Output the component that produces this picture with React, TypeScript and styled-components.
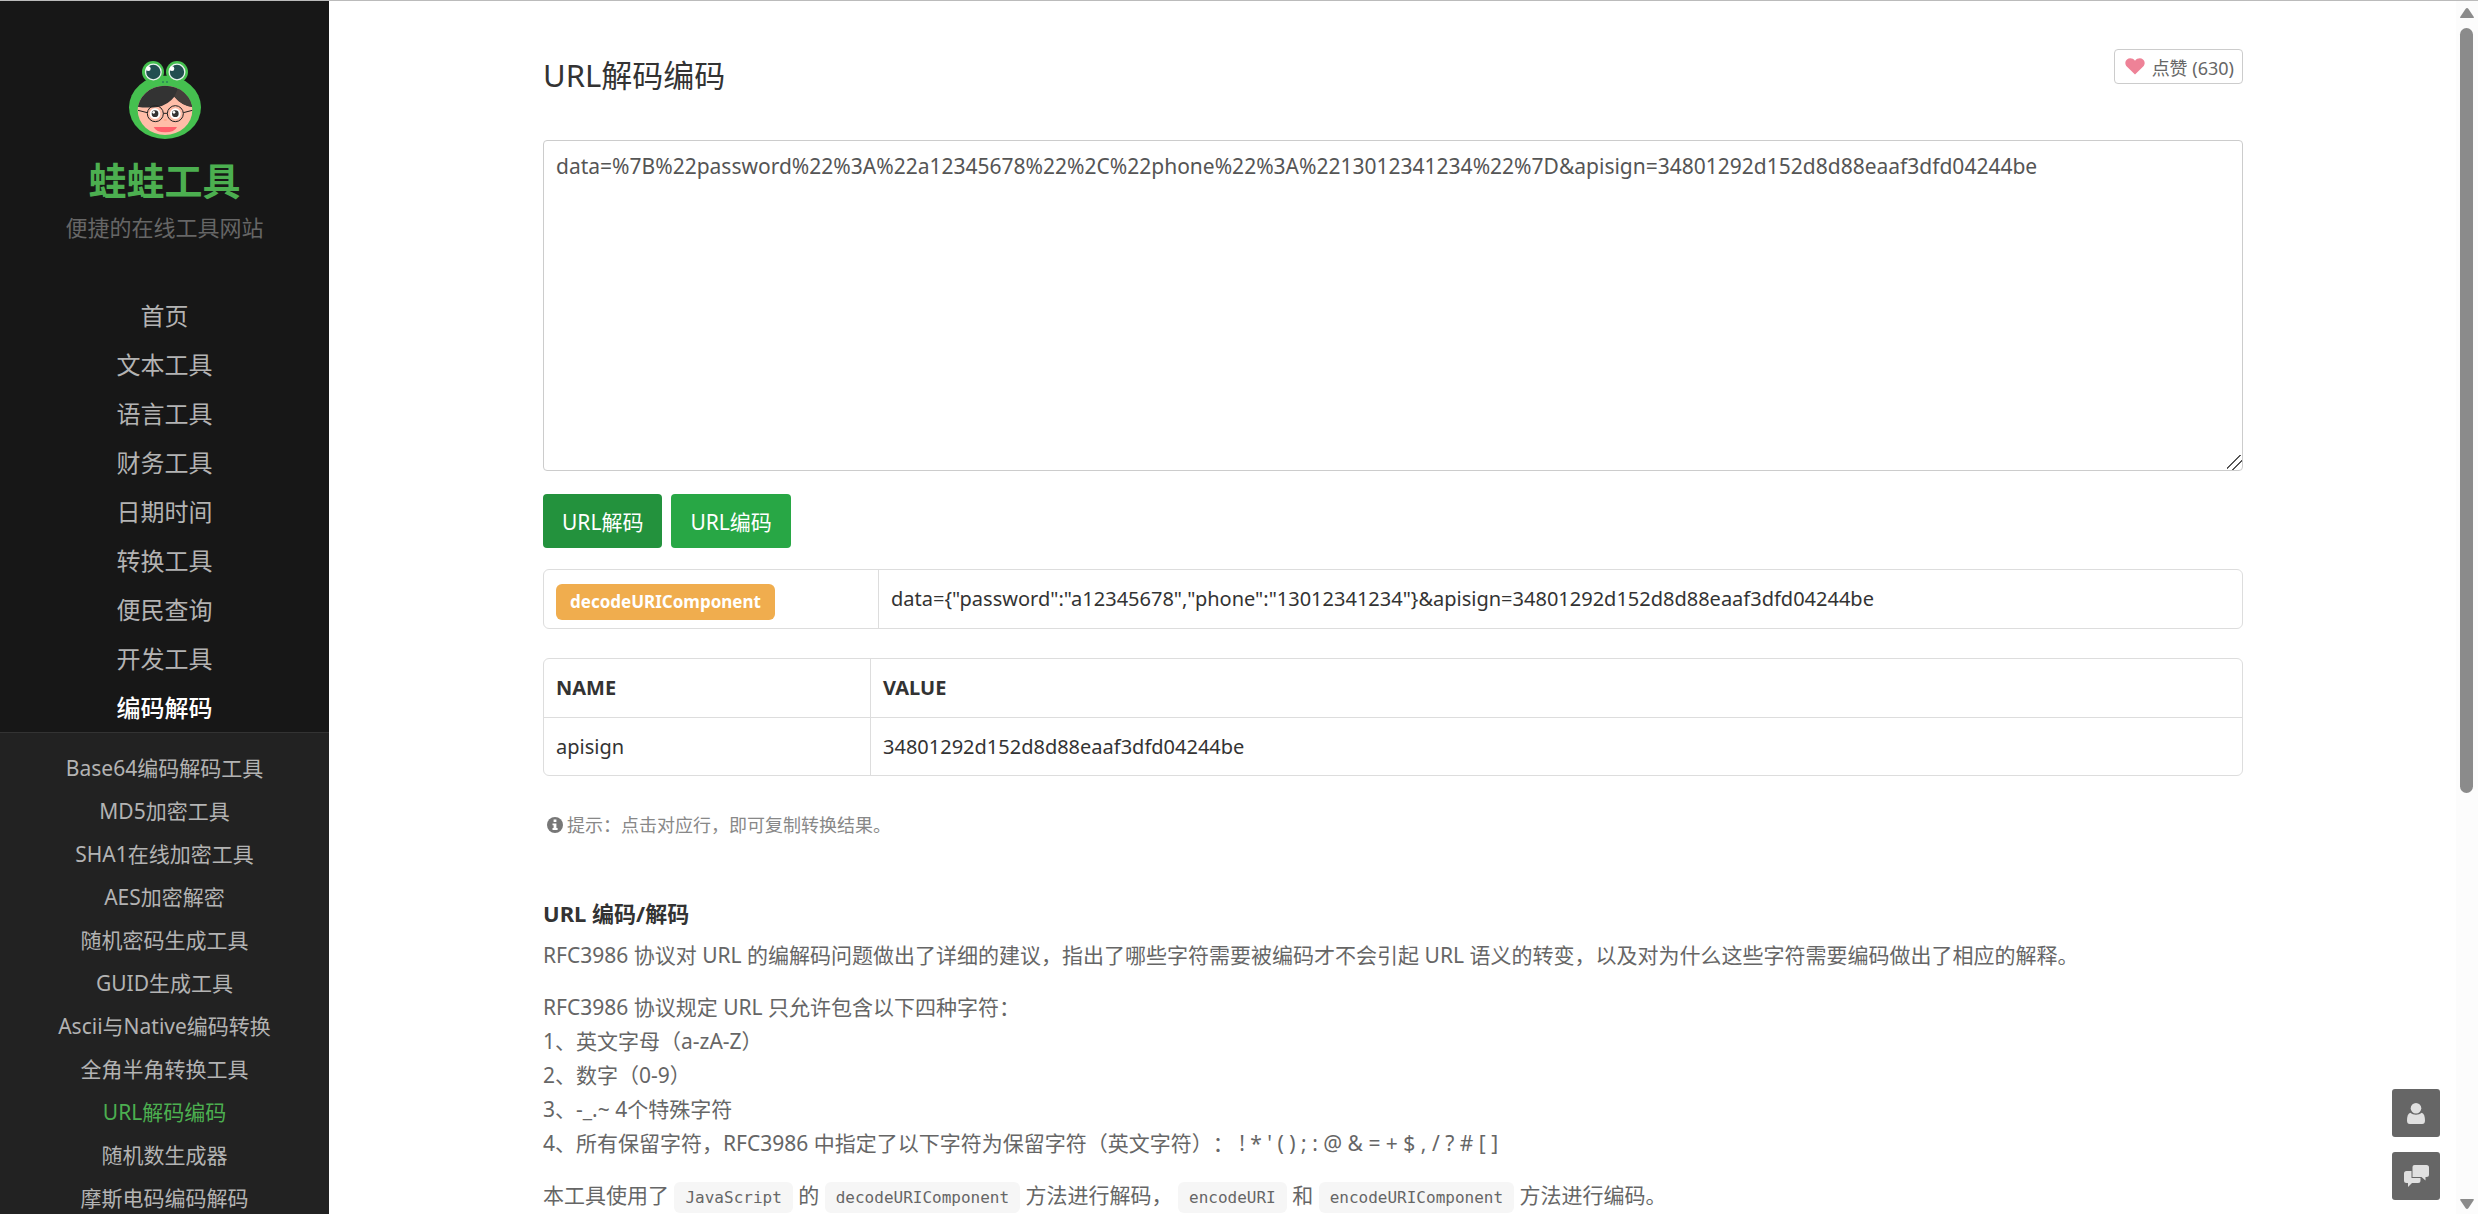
import React, { useState } from "react";
import styled, { createGlobalStyle } from "styled-components";

const sans = `"Noto Sans", "Noto Sans CJK SC", sans-serif`;

const GlobalStyle = createGlobalStyle`
  * { box-sizing: border-box; }
  body {
    margin: 0;
    background: #fff;
    color: #333;
    font-family: ${sans};
    font-size: 20px;
    line-height: 34px;
    text-spacing-trim: space-all;
  }
  button, textarea { font-family: inherit; }
  a { color: inherit; text-decoration: none; }
`;

const Shell = styled.div`
  display: grid;
  grid-template-columns: 329px minmax(0, 1fr) 22px;
  height: 100vh;
  border-top: 1px solid #bbb;
  overflow: hidden;
`;

const Sidebar = styled.aside`
  min-height: 0;
  padding-top: 60px;
  overflow: hidden;
  background: #171717;
  color: #b3b3b3;
  text-align: center;
`;

const Brand = styled.a`
  display: flex;
  flex-direction: column;
  align-items: center;
`;

const BrandName = styled.strong`
  margin-top: 14px;
  color: #4caf50;
  font-size: 38px;
  line-height: 54px;
`;

const BrandNote = styled.span`
  margin-top: 4px;
  color: #666;
  font-size: 22px;
  line-height: 32px;
`;

const NavList = styled.ul`
  margin: 48px 0 0;
  padding: 0;
  list-style: none;
`;

const NavLink = styled.a<{ $active?: boolean }>`
  display: block;
  font-size: 24px;
  line-height: 49px;
  color: ${(p) => (p.$active ? "#fff" : "inherit")};
  font-weight: ${(p) => (p.$active ? 500 : 400)};
`;

const SubList = styled.ul`
  margin: 0;
  padding: 14px 0 0;
  border-top: 1px solid #333;
  background: #222;
  list-style: none;
`;

const SubLink = styled.a<{ $active?: boolean }>`
  display: block;
  font-size: 21px;
  line-height: 43px;
  color: ${(p) => (p.$active ? "#4caf50" : "inherit")};
`;

const Main = styled.main`
  min-height: 0;
  padding-left: 1px;
  overflow: hidden;
`;

const Container = styled.div`
  max-width: 1700px;
  margin: 0 auto;
`;

const PageHead = styled.header`
  display: flex;
  justify-content: space-between;
  align-items: flex-start;
  padding: 48px 0 39px;
`;

const Title = styled.h1`
  margin: 0;
  font-size: 31px;
  font-weight: 400;
  line-height: 52px;
`;

const LikeButton = styled.button`
  display: flex;
  align-items: center;
  gap: 7px;
  height: 35px;
  padding: 0 8px 0 10px;
  border: 1px solid #ccc;
  border-radius: 4px;
  background: #fff;
  color: #666;
  font-size: 18px;
`;

const SourceBox = styled.textarea`
  display: block;
  width: 100%;
  height: 331px;
  padding: 8px 12px;
  border: 1px solid #ccc;
  border-radius: 4px;
  background: #fff;
  color: #555;
  font-size: 21px;
  line-height: 34px;
  outline: none;
  resize: vertical;

  &::-webkit-resizer {
    background: linear-gradient(
      135deg,
      transparent 42%,
      #555 42% 49%,
      transparent 49% 66%,
      #555 66% 73%,
      transparent 73%
    );
  }
`;

const Actions = styled.div`
  display: flex;
  gap: 9px;
  margin: 23px 0 21px;
`;

const ActionButton = styled.button<{ $pressed: boolean }>`
  height: 54px;
  padding: 0 19px;
  border: 0;
  border-radius: 4px;
  background: ${(p) => (p.$pressed ? "#23923d" : "#28a745")};
  color: #fff;
  font-size: 21px;
`;

const DataTable = styled.table<{ $first: number }>`
  width: 100%;
  table-layout: fixed;
  border: 1px solid #ddd;
  border-radius: 6px;
  border-spacing: 0;
  text-align: left;

  th, td { height: 58px; padding: 0 12px; }
  th:first-child { width: ${(p) => p.$first}px; }
  th + th, th + td, td + td { border-left: 1px solid #ddd; }
  thead + tbody td { border-top: 1px solid #ddd; }
  & + & { margin-top: 29px; }
`;

const Badge = styled.span`
  display: block;
  width: fit-content;
  margin-top: 6px;
  padding: 0 14px;
  border-radius: 6px;
  background: #f0ad4e;
  color: #fff;
  font-size: 17px;
  font-weight: 700;
  line-height: 36px;
`;

const Hint = styled.p`
  display: flex;
  align-items: center;
  gap: 4px;
  margin: 32px 0 0;
  padding-left: 4px;
  color: #888;
  font-size: 18px;
`;

const Article = styled.article`
  margin-top: 53px;
  color: #666;
  font-size: 21px;

  p { margin: 0 0 18px; }
`;

const ArticleTitle = styled.h2`
  margin: 0 0 7px;
  color: #333;
  font-size: 22px;
  font-weight: 700;
  line-height: 36px;
`;

const Code = styled.code`
  padding: 6px 11px;
  border-radius: 6px;
  background: #f6f6f6;
  font-family: "DejaVu Sans Mono", monospace;
  font-size: 16px;
`;

const FloatTools = styled.div`
  position: fixed;
  right: 38px;
  bottom: 14px;
  display: grid;
  gap: 15px;
`;

const FloatButton = styled.button`
  display: grid;
  place-items: center;
  width: 48px;
  height: 48px;
  padding: 0;
  border: 0;
  border-radius: 3px;
  background: #666;
`;

const ScrollTrack = styled.div`
  display: flex;
  flex-direction: column;
  align-items: center;
  padding: 7px 1px 5px 0;
  background: #fcfcfc;
`;

const ScrollThumb = styled.div`
  width: 13px;
  height: 63vh;
  margin: 10px 0 auto;
  border-radius: 7px;
  background: #8b8b8b;
`;

const FrogLogo = () => (
  <svg width="72" height="78" viewBox="387 183 216 234" aria-hidden="true">
    <circle cx="459" cy="216" r="33" fill="#45c04f" />
    <circle cx="531" cy="216" r="33" fill="#45c04f" />
    <ellipse cx="495" cy="322" rx="108" ry="95" fill="#45c04f" />
    <circle cx="460" cy="216" r="23.5" fill="#224f50" stroke="#e8f3ee" strokeWidth="4" />
    <circle cx="531" cy="216" r="23.5" fill="#224f50" stroke="#e8f3ee" strokeWidth="4" />
    <circle cx="445" cy="206" r="7" fill="#fff" />
    <circle cx="516" cy="206" r="7" fill="#fff" />
    <rect x="486" y="243" width="6" height="6" rx="2" fill="#2c8a55" />
    <rect x="498" y="243" width="6" height="6" rx="2" fill="#2c8a55" />
    <clipPath id="face"><ellipse cx="495" cy="331" rx="82" ry="74" /></clipPath>
    <g clipPath="url(#face)">
      <rect x="410" y="255" width="170" height="155" fill="#ffbda8" />
      <path d="M410 250H580V321Q545 317 523 290Q505 314 473 321Q440 325 410 320Z" fill="#333" />
      <path d="M536 262Q530 274 523 290Q545 317 580 322V262Z" fill="#443e3b" />
    </g>
    <circle cx="465" cy="341" r="16" fill="#fff" />
    <circle cx="526" cy="341" r="16" fill="#fff" />
    <circle cx="465" cy="341" r="10" fill="#333" />
    <circle cx="526" cy="341" r="10" fill="#333" />
    <circle cx="461" cy="337" r="4" fill="#fff" />
    <circle cx="522" cy="337" r="4" fill="#fff" />
    <g fill="none" stroke="#222" strokeWidth="3">
      <circle cx="466" cy="341" r="24" />
      <circle cx="526" cy="341" r="24" />
      <path d="M490 340H502M442 338L414 331M550 338L577 331" />
    </g>
    <ellipse cx="496" cy="360" rx="5" ry="3" fill="#ffa98d" />
    <path d="M461 381H531Q524 397 496 397Q468 397 461 381Z" fill="#ff5f6b" />
  </svg>
);

const HeartIcon = () => (
  <svg width="20" height="17" viewBox="0 0 20 17" aria-hidden="true">
    <path d="M10 16.5L1.8 8.6C-.4 6.3 .1 2.9 2 1.4C4.3 -.3 7.8 .1 10 2.7C12.2 .1 15.7 -.3 18 1.4C19.9 2.9 20.4 6.3 18.2 8.6Z" fill="#ee8297" />
  </svg>
);

const InfoIcon = () => (
  <svg width="16" height="16" viewBox="0 0 16 16" aria-hidden="true">
    <circle cx="8" cy="8" r="8" fill="#777" />
    <path d="M6.6 2.5H9.4V5H6.6ZM5.5 6.4H9.4V11H10.6V13H5.5V11H6.6V8.2H5.5Z" fill="#fff" />
  </svg>
);

const UserIcon = () => (
  <svg width="18" height="21" viewBox="0 0 18 21" aria-hidden="true" fill="#e0e0e0">
    <circle cx="9" cy="5.3" r="5.3" />
    <path d="M3.2 9.8C6.4 12.4 11.6 12.4 14.8 9.8C17 10.5 18 13.5 18 17.5C18 20 17 21 15.2 21H2.8C1 21 0 20 0 17.5C0 13.5 1 10.5 3.2 9.8Z" />
  </svg>
);

const ChatIcon = () => (
  <svg width="25" height="22" viewBox="0 0 25 22" aria-hidden="true" fill="#e0e0e0">
    <path d="M10.5 0H22.5Q25 0 25 2.5V9.5Q25 12 22.5 12H21.5V15.5L17.5 12H8.5V2Q8.5 0 10.5 0Z" />
    <path d="M7.5 6V13H16.5V15.5Q16.5 18 14 18H8L4 22V18H2.5Q0 18 0 15.5V8.5Q0 6 2.5 6Z" />
  </svg>
);

const ArrowIcon = ({ down }: { down?: boolean }) => (
  <svg width="14" height="10" viewBox="0 0 14 10" aria-hidden="true">
    <path
      d={
        down
          ? "M1 0H13Q14.5 0 13.5 1.5L8.5 9Q7 10.8 5.5 9L.5 1.5Q-.5 0 1 0Z"
          : "M1 10H13Q14.5 10 13.5 8.5L8.5 1Q7 -.8 5.5 1L.5 8.5Q-.5 10 1 10Z"
      }
      fill="#8b8b8b"
    />
  </svg>
);

const categories = ["首页", "文本工具", "语言工具", "财务工具", "日期时间", "转换工具", "便民查询", "开发工具", "编码解码"];

const tools = [
  "Base64编码解码工具",
  "MD5加密工具",
  "SHA1在线加密工具",
  "AES加密解密",
  "随机密码生成工具",
  "GUID生成工具",
  "Ascii与Native编码转换",
  "全角半角转换工具",
  "URL解码编码",
  "随机数生成器",
  "摩斯电码编码解码",
];

const sample =
  "data=%7B%22password%22%3A%22a12345678%22%2C%22phone%22%3A%2213012341234%22%7D&apisign=34801292d152d8d88eaaf3dfd04244be";

export default function App() {
  const [source, setSource] = useState(sample);
  const [mode, setMode] = useState<"decode" | "encode">("decode");

  return (
    <>
      <GlobalStyle />
      <Shell>
        <Sidebar>
          <Brand href="#">
            <FrogLogo />
            <BrandName>蛙蛙工具</BrandName>
            <BrandNote>便捷的在线工具网站</BrandNote>
          </Brand>
          <nav>
            <NavList>
              {categories.map((name) => (
                <li key={name}>
                  <NavLink href="#" $active={name === "编码解码"}>{name}</NavLink>
                </li>
              ))}
            </NavList>
            <SubList>
              {tools.map((name) => (
                <li key={name}>
                  <SubLink href="#" $active={name === "URL解码编码"}>{name}</SubLink>
                </li>
              ))}
            </SubList>
          </nav>
        </Sidebar>

        <Main>
          <Container>
            <PageHead>
              <Title>URL解码编码</Title>
              <LikeButton type="button">
                <HeartIcon />
                点赞 (630)
              </LikeButton>
            </PageHead>

            <SourceBox
              aria-label="URL解码编码"
              spellCheck={false}
              value={source}
              onChange={(e) => setSource(e.target.value)}
            />

            <Actions>
              <ActionButton type="button" $pressed={mode === "decode"} onClick={() => setMode("decode")}>
                URL解码
              </ActionButton>
              <ActionButton type="button" $pressed={mode === "encode"} onClick={() => setMode("encode")}>
                URL编码
              </ActionButton>
            </Actions>

            <DataTable $first={334}>
              <tbody>
                <tr>
                  <th scope="row"><Badge>decodeURIComponent</Badge></th>
                  <td>{'data={"password":"a12345678","phone":"13012341234"}&apisign=34801292d152d8d88eaaf3dfd04244be'}</td>
                </tr>
              </tbody>
            </DataTable>

            <DataTable $first={326}>
              <thead>
                <tr>
                  <th scope="col">NAME</th>
                  <th scope="col">VALUE</th>
                </tr>
              </thead>
              <tbody>
                <tr>
                  <td>apisign</td>
                  <td>34801292d152d8d88eaaf3dfd04244be</td>
                </tr>
              </tbody>
            </DataTable>

            <Hint>
              <InfoIcon />
              提示：点击对应行，即可复制转换结果。
            </Hint>

            <Article>
              <ArticleTitle>URL 编码/解码</ArticleTitle>
              <p>
                RFC3986 协议对 URL 的编解码问题做出了详细的建议，指出了哪些字符需要被编码才不会引起 URL 语义的转变，以及对为什么这些字符需要编码做出了相应的解释。
              </p>
              <p>
                RFC3986 协议规定 URL 只允许包含以下四种字符：
                <br />
                1、英文字母（a-zA-Z）
                <br />
                2、数字（0-9）
                <br />
                3、-_.~ 4个特殊字符
                <br />
                4、所有保留字符，RFC3986 中指定了以下字符为保留字符（英文字符）： ! * ' ( ) ; : @ &amp; = + $ , / ? # [ ]
              </p>
              <p>
                本工具使用了 <Code>JavaScript</Code> 的 <Code>decodeURIComponent</Code> 方法进行解码，{" "}
                <Code>encodeURI</Code> 和 <Code>encodeURIComponent</Code> 方法进行编码。
              </p>
            </Article>
          </Container>
        </Main>

        <ScrollTrack aria-hidden="true">
          <ArrowIcon />
          <ScrollThumb />
          <ArrowIcon down />
        </ScrollTrack>
      </Shell>

      <FloatTools>
        <FloatButton type="button" aria-label="用户"><UserIcon /></FloatButton>
        <FloatButton type="button" aria-label="反馈"><ChatIcon /></FloatButton>
      </FloatTools>
    </>
  );
}
